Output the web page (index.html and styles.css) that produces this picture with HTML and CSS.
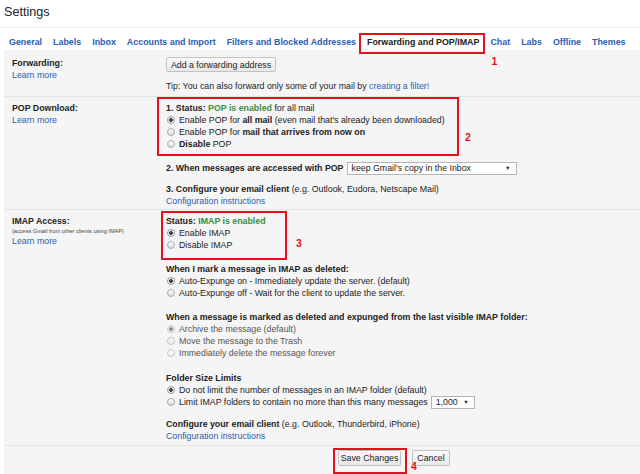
FILE: index.html
```html
<!DOCTYPE html>
<html lang="en">
<head>
<meta charset="utf-8">
<title>Settings</title>
<link rel="stylesheet" href="styles.css">
</head>
<body>
<h1 class="title">Settings</h1>

<nav class="tabs">
  <a class="tab">General</a>
  <a class="tab">Labels</a>
  <a class="tab">Inbox</a>
  <a class="tab">Accounts and Import</a>
  <a class="tab">Filters and Blocked Addresses</a>
  <a class="tab active"><span class="mark">Forwarding and POP/IMAP<span class="mark-box tab-box"></span><span class="mark-num num-1">1</span></span></a>
  <a class="tab">Chat</a>
  <a class="tab">Labs</a>
  <a class="tab">Offline</a>
  <a class="tab">Themes</a>
</nav>

<main class="panel">
  <section class="row row-fwd">
    <div class="label">
      <div class="label-title">Forwarding:</div>
      <a class="link">Learn more</a>
    </div>
    <div class="value">
      <button class="btn btn-fwd" type="button">Add a forwarding address</button>
      <div class="tip">Tip: You can also forward only some of your mail by <a class="link">creating a filter!</a></div>
    </div>
  </section>

  <section class="row row-pop">
    <div class="label">
      <div class="label-title">POP Download:</div>
      <a class="link">Learn more</a>
    </div>
    <div class="value">
      <div class="mark mark-block">
        <div class="line"><b>1. Status: </b><b class="ok">POP is enabled</b> for all mail</div>
        <label class="opt"><input type="radio" name="pop" checked>Enable POP for <b>all mail</b> (even mail that's already been downloaded)</label>
        <label class="opt"><input type="radio" name="pop">Enable POP for <b>mail that arrives from now on</b></label>
        <label class="opt"><input type="radio" name="pop"><b>Disable</b> POP</label>
        <span class="mark-box pop-box"></span>
        <span class="mark-num num-2">2</span>
      </div>
      <div class="line step-2"><b>2. When messages are accessed with POP</b><span class="select select-pop">keep Gmail's copy in the Inbox<span class="caret">&#9660;</span></span></div>
      <div class="line step-3"><b>3. Configure your email client</b> (e.g. Outlook, Eudora, Netscape Mail)</div>
      <a class="link">Configuration instructions</a>
    </div>
  </section>

  <section class="row row-imap">
    <div class="label">
      <div class="label-title">IMAP Access:</div>
      <div class="label-note">(access Gmail from other clients using IMAP)</div>
      <a class="link">Learn more</a>
    </div>
    <div class="value">
      <div class="mark mark-block imap-status">
        <div class="line"><b>Status: </b><b class="ok">IMAP is enabled</b></div>
        <label class="opt"><input type="radio" name="imap" checked>Enable IMAP</label>
        <label class="opt"><input type="radio" name="imap">Disable IMAP</label>
        <span class="mark-box imap-box"></span>
        <span class="mark-num num-3">3</span>
      </div>

      <div class="group">
        <div class="line"><b>When I mark a message in IMAP as deleted:</b></div>
        <label class="opt"><input type="radio" name="expunge" checked>Auto-Expunge on - Immediately update the server. (default)</label>
        <label class="opt"><input type="radio" name="expunge">Auto-Expunge off - Wait for the client to update the server.</label>
      </div>

      <div class="group">
        <div class="line"><b>When a message is marked as deleted and expunged from the last visible IMAP folder:</b></div>
        <label class="opt dim"><input type="radio" name="expunged" checked disabled>Archive the message (default)</label>
        <label class="opt dim"><input type="radio" name="expunged" disabled>Move the message to the Trash</label>
        <label class="opt dim"><input type="radio" name="expunged" disabled>Immediately delete the message forever</label>
      </div>

      <div class="group group-size">
        <div class="line"><b>Folder Size Limits</b></div>
        <label class="opt"><input type="radio" name="size" checked>Do not limit the number of messages in an IMAP folder (default)</label>
        <label class="opt"><input type="radio" name="size">Limit IMAP folders to contain no more than this many messages<span class="select select-size">1,000<span class="caret">&#9660;</span></span></label>
      </div>

      <div class="group group-client">
        <div class="line"><b>Configure your email client</b> (e.g. Outlook, Thunderbird, iPhone)</div>
        <a class="link">Configuration instructions</a>
      </div>
    </div>
  </section>

  <div class="actions">
    <span class="mark">
      <button class="btn btn-save" type="button">Save Changes</button>
      <span class="mark-box save-box"></span>
      <span class="mark-num num-4">4</span>
    </span>
    <button class="btn btn-cancel" type="button">Cancel</button>
  </div>
</main>
</body>
</html>
```

FILE: styles.css
```css
* {
  box-sizing: border-box;
}

html,
body {
  margin: 0;
  padding: 0;
}

body {
  width: 640px;
  height: 474px;
  overflow: hidden;
  background: #fff;
  color: #222;
  font-family: "Liberation Sans", Arial, sans-serif;
  font-size: 8.8px;
  line-height: 12px;
}

b {
  font-weight: bold;
}

.link {
  color: #2a5db7;
  text-decoration: none;
  cursor: pointer;
}

/* page heading */
.title {
  margin: 0;
  height: 28px;
  padding: 4px 0 0 4px;
  font-size: 12.6px;
  font-weight: normal;
  line-height: 16px;
  color: #222;
  border-bottom: 1px solid #efefef;
}

/* tab strip */
.tabs {
  display: flex;
  height: 22px;
  padding: 8px 0 2px 3.5px;
  white-space: nowrap;
}

.tab {
  padding: 0 5.5px;
  font-size: 8.9px;
  font-weight: bold;
  line-height: 12px;
  color: #2a5db7;
}

.tab.active {
  color: #222;
}

/* settings panel */
.panel {
  margin-left: 4px;
  height: 424px;
  background: #f5f5f5;
}

.row {
  display: grid;
  grid-template-columns: 154px 1fr;
  padding-left: 8px;
  border-bottom: 1px solid #e4e4e4;
}

.label-title {
  font-weight: bold;
}

.label-note {
  font-size: 5.6px;
  line-height: 8px;
  color: #444;
}

.row-fwd {
  padding-top: 7px;
  padding-bottom: 3px;
  height: 47px;
}

.row-pop {
  padding-top: 5px;
  padding-bottom: 2px;
}

.row-imap {
  padding-top: 5px;
  padding-bottom: 3px;
}

.line {
  white-space: nowrap;
}

.ok {
  color: #3b8f3e;
}

/* radio options */
.opt {
  display: block;
  height: 12px;
  white-space: nowrap;
}

.opt input {
  -webkit-appearance: none;
  appearance: none;
  display: inline-block;
  width: 8px;
  height: 8px;
  margin: 0 4px 0 1px;
  vertical-align: -1px;
  border: 1px solid #aaa;
  border-radius: 50%;
  background: linear-gradient(#fdfdfd, #dedede);
}

.opt input:checked {
  background: radial-gradient(circle, #444 0 1.6px, #e9e9e9 2px, #f5f5f5 4px);
  border-color: #9a9a9a;
}

.opt.dim {
  color: #555;
}

.opt.dim input {
  border-color: #c4c4c4;
  background: linear-gradient(#fbfbfb, #ececec);
}

.opt.dim input:checked {
  background: radial-gradient(circle, #888 0 1.5px, #eee 2px, #f7f7f7 4px);
}

/* buttons and selects */
.btn {
  font-family: inherit;
  font-size: 8.8px;
  color: #222;
  line-height: 12px;
  border: 1px solid #c2c2c2;
  border-radius: 2px;
  background: linear-gradient(#fafafa, #e9e9e9);
  padding: 0 6px;
  margin: 0;
}

.btn-fwd {
  display: block;
  width: 110px;
  height: 15px;
  padding: 0;
}

.tip {
  margin-top: 8px;
}

.select {
  position: relative;
  display: inline-block;
  height: 13px;
  margin-left: 3px;
  padding: 0 4px;
  line-height: 11px;
  background: #fff;
  border: 1px solid #b5b5b5;
  font-weight: normal;
  vertical-align: middle;
}

.select-pop {
  width: 170px;
}

.select-size {
  width: 44px;
  margin-left: 3px;
}

.caret {
  position: absolute;
  right: 5px;
  top: 0;
  font-size: 5.5px;
  color: #222;
}

.step-2 {
  margin-top: 12px;
  height: 12px;
  display: flex;
  align-items: center;
}

.step-3 {
  margin-top: 9px;
}

.group {
  margin-top: 12px;
}

.group-size {
  margin-top: 13px;
}

.group-client {
  margin-top: 10px;
}

.actions {
  display: flex;
  gap: 11px;
  padding: 4px 0 0 334px;
}

.btn-save {
  width: 63px;
  height: 16px;
  padding: 0;
}

.btn-cancel {
  width: 38px;
  height: 16px;
  padding: 0;
}

/* red call-out frames */
.mark {
  position: relative;
  display: inline-block;
}

.mark-block {
  display: block;
}

.mark-box {
  position: absolute;
  border: 2px solid #e3111c;
  pointer-events: none;
}

.mark-num {
  position: absolute;
  font-size: 10.5px;
  font-weight: bold;
  line-height: 10px;
  color: #e3111c;
}

.tab-box {
  top: -3px;
  bottom: -6px;
  left: -8px;
  right: -6px;
}

.num-1 {
  left: calc(100% + 12px);
  top: 20px;
}

.pop-box {
  top: -5px;
  bottom: -6px;
  left: -9px;
  width: 302px;
}

.num-2 {
  left: 299px;
  top: 30px;
}

.imap-box {
  top: -4px;
  bottom: -9px;
  left: -5px;
  width: 126px;
}

.num-3 {
  left: 130px;
  top: 23px;
}

.save-box {
  top: -2px;
  bottom: -8px;
  left: -5px;
  right: -6px;
}

.num-4 {
  left: 73px;
  top: 11px;
}
```
